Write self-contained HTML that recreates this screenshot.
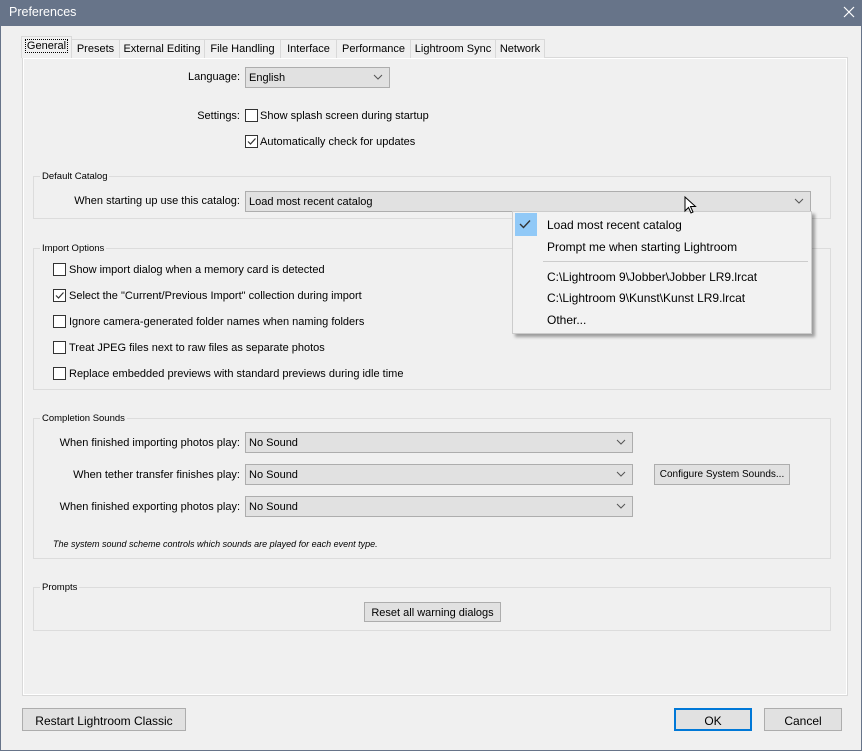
<!DOCTYPE html>
<html><head><meta charset="utf-8"><style>
*{box-sizing:border-box;margin:0;padding:0}
body{width:862px;height:751px;position:relative;background:#f0f0f0;font-family:"Liberation Sans",sans-serif;font-size:11px;color:#000;overflow:hidden}
.a{position:absolute;white-space:nowrap}
.win{left:0;top:0;width:862px;height:751px;border:1px solid #677489}
.title{left:0;top:0;width:862px;height:26px;background:#677489;color:#fff;font-size:12.5px;padding:5px 9px}
.tab{top:39px;height:19px;border:1px solid #d9d9d9;border-bottom:none;background:#f0f0f0;padding:3px 0 0;text-align:center}
.panel{left:22px;top:57px;width:826px;height:639px;border:1px solid #d9d9d9;background:#f0f0f0;box-shadow:inset 0 0 0 1px #fff}
.grp{border:1px solid #dcdcdc}
.gl{font-size:9.5px;background:#f0f0f0;padding:0 2px}
.dd{height:21px;border:1px solid #adadad;background:#e1e1e1;padding:4px 3px}
.chev{position:absolute;right:6px;top:5px;width:10px;height:8px}
.cb{width:13px;height:13px;border:1px solid #333;background:#fff}
.btn{border:1px solid #adadad;background:#e1e1e1;text-align:center}
.r{text-align:right}
.t{margin-top:1px}
</style></head><body>
<div class="a win"></div>
<div class="a title">Preferences</div>
<svg class="a" style="left:843px;top:6px" width="12" height="12"><path d="M1 1L11 11M11 1L1 11" stroke="#fff" stroke-width="1.2"/></svg>

<div class="a panel"></div>
<div class="a tab" style="left:71px;width:49px">Presets</div>
<div class="a tab" style="left:119px;width:86px">External Editing</div>
<div class="a tab" style="left:204px;width:77px">File Handling</div>
<div class="a tab" style="left:280px;width:57px">Interface</div>
<div class="a tab" style="left:336px;width:75px">Performance</div>
<div class="a tab" style="left:410px;width:86px">Lightroom Sync</div>
<div class="a tab" style="left:495px;width:50px">Network</div>
<div class="a tab" style="left:21px;top:36px;height:22px;width:51px;background:#f0f0f0;padding-top:3px"><span style="outline:1px dotted #000;padding:0 1px">General</span></div>

<div class="a r" style="left:100px;width:140px;top:71px">Language:</div>
<div class="a dd" style="left:245px;top:67px;width:145px">English<svg class="chev" viewBox="0 0 10 8"><path d="M1 2L5 6L9 2" fill="none" stroke="#555"/></svg></div>
<div class="a r" style="left:100px;width:140px;top:110px">Settings:</div>
<div class="a cb" style="left:245px;top:109px"></div>
<div class="a" style="left:260px;top:110px">Show splash screen during startup</div>
<div class="a cb" style="left:245px;top:135px"><svg width="11" height="11" style="position:absolute;left:0;top:0"><path d="M2 5.5L4.5 8L9.5 2.5" fill="none" stroke="#333" stroke-width="1.2"/></svg></div>
<div class="a" style="left:260px;top:136px">Automatically check for updates</div>

<div class="a grp" style="left:33px;top:176px;width:798px;height:43px"></div>
<div class="a gl" style="left:40px;top:171px">Default Catalog</div>
<div class="a r" style="left:40px;width:200px;top:195px">When starting up use this catalog:</div>
<div class="a dd" style="left:245px;top:191px;width:566px">Load most recent catalog<svg class="chev" viewBox="0 0 10 8"><path d="M1 2L5 6L9 2" fill="none" stroke="#555"/></svg></div>

<div class="a grp" style="left:33px;top:248px;width:798px;height:142px"></div>
<div class="a gl" style="left:40px;top:243px">Import Options</div>
<div class="a cb" style="left:53px;top:263px"></div><div class="a" style="left:69px;top:264px">Show import dialog when a memory card is detected</div>
<div class="a cb" style="left:53px;top:289px"><svg width="11" height="11" style="position:absolute;left:0;top:0"><path d="M2 5.5L4.5 8L9.5 2.5" fill="none" stroke="#333" stroke-width="1.2"/></svg></div><div class="a" style="left:69px;top:290px">Select the "Current/Previous Import" collection during import</div>
<div class="a cb" style="left:53px;top:315px"></div><div class="a" style="left:69px;top:316px">Ignore camera-generated folder names when naming folders</div>
<div class="a cb" style="left:53px;top:341px"></div><div class="a" style="left:69px;top:342px">Treat JPEG files next to raw files as separate photos</div>
<div class="a cb" style="left:53px;top:367px"></div><div class="a" style="left:69px;top:368px">Replace embedded previews with standard previews during idle time</div>

<div class="a grp" style="left:33px;top:418px;width:798px;height:141px"></div>
<div class="a gl" style="left:40px;top:413px">Completion Sounds</div>
<div class="a r" style="left:40px;width:200px;top:437px">When finished importing photos play:</div>
<div class="a dd" style="left:245px;top:432px;width:388px">No Sound<svg class="chev" viewBox="0 0 10 8"><path d="M1 2L5 6L9 2" fill="none" stroke="#555"/></svg></div>
<div class="a r" style="left:40px;width:200px;top:469px">When tether transfer finishes play:</div>
<div class="a dd" style="left:245px;top:464px;width:388px">No Sound<svg class="chev" viewBox="0 0 10 8"><path d="M1 2L5 6L9 2" fill="none" stroke="#555"/></svg></div>
<div class="a btn" style="left:654px;top:464px;width:136px;height:21px;padding-top:4px;font-size:10px">Configure System Sounds...</div>
<div class="a r" style="left:40px;width:200px;top:501px">When finished exporting photos play:</div>
<div class="a dd" style="left:245px;top:496px;width:388px">No Sound<svg class="chev" viewBox="0 0 10 8"><path d="M1 2L5 6L9 2" fill="none" stroke="#555"/></svg></div>
<div class="a" style="left:53px;top:539px;font-size:9px;font-style:italic">The system sound scheme controls which sounds are played for each event type.</div>

<div class="a grp" style="left:33px;top:587px;width:798px;height:44px"></div>
<div class="a gl" style="left:40px;top:582px">Prompts</div>
<div class="a btn" style="left:364px;top:602px;width:137px;height:20px;padding-top:4px">Reset all warning dialogs</div>

<div class="a btn" style="left:22px;top:708px;width:164px;height:23px;padding-top:5px;font-size:12px">Restart Lightroom Classic</div>
<div class="a btn" style="left:674px;top:708px;width:78px;height:23px;padding-top:4px;font-size:12px;border:2px solid #0078d7">OK</div>
<div class="a btn" style="left:764px;top:708px;width:78px;height:23px;padding-top:5px;font-size:12px">Cancel</div>

<div class="a" style="left:512px;top:211px;width:300px;height:123px;background:#f2f2f2;border:1px solid #ccc;box-shadow:3px 3px 3px rgba(0,0,0,.35)"></div>
<div class="a" style="left:515px;top:213px;width:22px;height:23px;background:#91c9f7"></div>
<svg class="a" style="left:519px;top:219px" width="12" height="10"><path d="M1 5L4.5 8.5L11 1.5" fill="none" stroke="#333" stroke-width="1.4"/></svg>
<div class="a" style="left:547px;top:218px;font-size:12px">Load most recent catalog</div>
<div class="a" style="left:547px;top:240px;font-size:12px">Prompt me when starting Lightroom</div>
<div class="a" style="left:543px;top:261px;width:265px;height:1px;background:#ccc"></div>
<div class="a" style="left:547px;top:291px;font-size:12px">C:\Lightroom 9\Kunst\Kunst LR9.lrcat</div>
<div class="a" style="left:547px;top:270px;font-size:12px">C:\Lightroom 9\Jobber\Jobber LR9.lrcat</div>
<div class="a" style="left:547px;top:313px;font-size:12px">Other...</div>
<svg class="a" style="left:684px;top:196px" width="14" height="20"><path d="M1 1L1 15L4.5 11.5L7 17L9 16L6.5 10.5L11.5 10.5Z" fill="#fff" stroke="#000" stroke-width="1"/></svg>
</body></html>
